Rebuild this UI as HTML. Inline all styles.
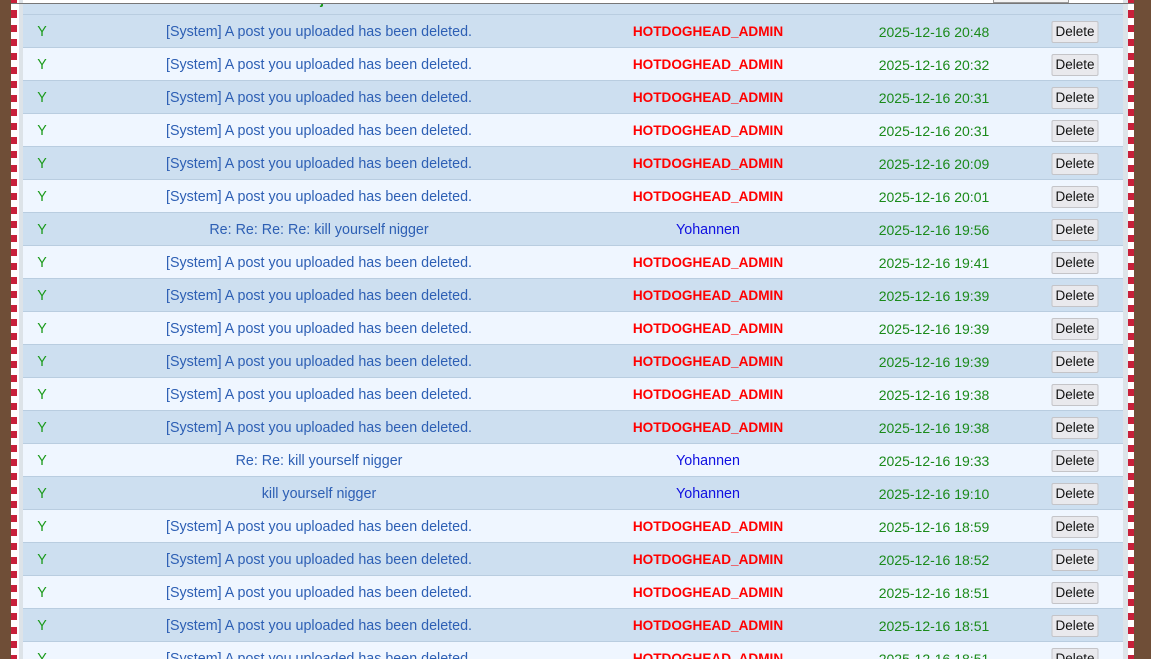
<!DOCTYPE html>
<html><head><style>
html,body{margin:0;padding:0;width:1151px;height:659px;overflow:hidden;background:#fff;font-family:"Liberation Sans",sans-serif;}
#wrap{position:relative;width:1151px;height:659px;overflow:hidden;}
.brownL{position:absolute;left:0;top:0;width:11px;height:659px;background:#6f4e37;}
.brownR{position:absolute;left:1134px;top:0;width:17px;height:659px;background:#6f4e37;}
.stripe{position:absolute;top:0;width:6px;height:659px;background:repeating-linear-gradient(to bottom,#c8203a 0,#c8203a 7px,#fff 7px,#fff 14px);background-position:0 11px;}
.gap{position:absolute;top:0;height:659px;background:#e4e8ec;}
.topline{position:absolute;left:11px;top:3px;width:1123px;height:1px;background:#777;}
.tbl{position:absolute;left:23px;top:4px;width:1100px;}
.row{position:absolute;left:0;width:1100px;height:32px;border-top:1px solid #b9cde0;font-size:14.3px;}
.row span{position:absolute;top:1px;line-height:32px;white-space:nowrap;transform:translateX(-50%);}
.a{background:#cddff0;} .b{background:#eff6ff;}
.y{color:#1a9a1a;} .s{color:#2d5fb4;} .row .adm{color:#ff0000;font-weight:bold;font-size:13.6px;} .u{color:#1010e0;} .row .d{color:#1a8a1a;font-size:14px;}
.row .btn{top:6px;line-height:20px;height:20px;width:45px;text-align:center;background:#e9e9ed;border:1px solid #c4c4c8;border-radius:2px;color:#111;font-size:13.5px;}
.hdr{position:absolute;left:0;top:0;width:1100px;height:10px;background:#cddff0;border-bottom:1px solid #b9cde0;overflow:hidden;}
.hdr span{position:absolute;top:-13px;color:#1a9a1a;font-weight:bold;font-size:14px;transform:translateX(-50%);}
.topbar{position:absolute;left:993px;top:0;width:74px;height:2px;background:#f4f4f4;border:1px solid #999;border-top:0;}
</style></head><body><div id="wrap">
<div class="brownL"></div>
<div class="stripe" style="left:11px"></div>
<div class="gap" style="left:17px;width:6px;background:linear-gradient(to right,#fff 0,#fff 2px,#dde3e8 2px)"></div>
<div class="gap" style="left:1123px;width:5px;background:#dde3e8"></div>
<div class="stripe" style="left:1128px"></div>
<div class="brownR"></div>
<div class="topline"></div>
<div class="topbar"></div>
<div class="tbl">
<div class="hdr"><span style="left:19px">R</span><span style="left:296px">Subject</span><span style="left:685px">From</span><span style="left:911px">Date</span><span style="left:1052px">Action</span></div>
<div id="rows"></div>
</div>
</div>
<script>
var d=[
["s","20:48"],["s","20:32"],["s","20:31"],["s","20:31"],["s","20:09"],["s","20:01"],
["Re: Re: Re: Re: kill yourself nigger","19:56"],["s","19:41"],["s","19:39"],["s","19:39"],["s","19:39"],["s","19:38"],["s","19:38"],
["Re: Re: kill yourself nigger","19:33"],["kill yourself nigger","19:10"],["s","18:59"],["s","18:52"],["s","18:51"],["s","18:51"],["s","18:51"]];
var h="";
for(var i=0;i<d.length;i++){
 var sys=d[i][0]=="s";
 var subj=sys?"[System] A post you uploaded has been deleted.":d[i][0];
 h+='<div class="row '+(i%2==0?'a':'b')+'" style="top:'+(10+i*33)+'px">'+
 '<span class="y" style="left:19px">Y</span>'+
 '<span class="s" style="left:296px">'+subj+'</span>'+
 (sys?'<span class="adm" style="left:685px">HOTDOGHEAD_ADMIN</span>':'<span class="u" style="left:685px">Yohannen</span>')+
 '<span class="d" style="left:911px">2025-12-16 '+d[i][1]+'</span>'+
 '<span class="btn" style="left:1052px">Delete</span></div>';
}
document.getElementById("rows").innerHTML=h;
</script>
</body></html>
